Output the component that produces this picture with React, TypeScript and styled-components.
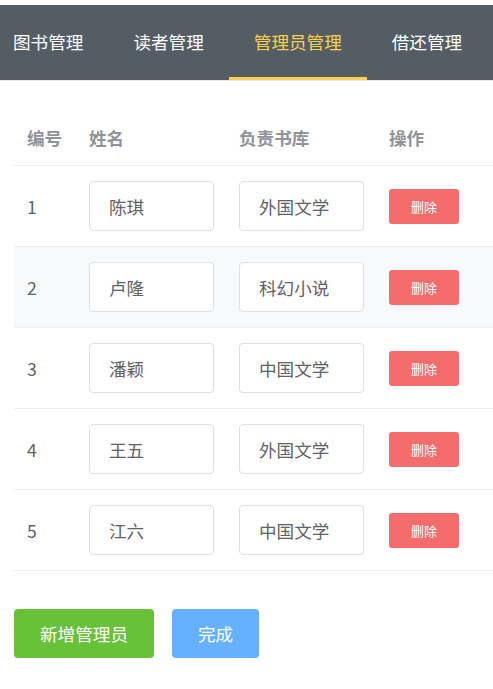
import React from 'react'
import styled, { createGlobalStyle } from 'styled-components'

const GlobalStyle = createGlobalStyle`
  body {
    margin: 0;
    background: #fff;
    font-family: "Noto Sans CJK SC", "Noto Sans", sans-serif;
  }
`

const menus = ['图书管理', '读者管理', '管理员管理', '借还管理']

const admins = [
  { id: 1, name: '陈琪', lib: '外国文学' },
  { id: 2, name: '卢隆', lib: '科幻小说' },
  { id: 3, name: '潘颖', lib: '中国文学' },
  { id: 4, name: '王五', lib: '外国文学' },
  { id: 5, name: '江六', lib: '中国文学' },
]

// the second row is shown hovered in the screenshot
const hoveredRow = 1

export default function App (): JSX.Element {
  return (
    <Page>
      <GlobalStyle />
      <NavBar>
        <NavList>
          {menus.map((m, i) => (
            <NavItem key={m} active={i === 2}>{m}</NavItem>
          ))}
        </NavList>
      </NavBar>

      <Table>
        <HeadRow>
          <HeadCell>编号</HeadCell>
          <HeadCell>姓名</HeadCell>
          <HeadCell>负责书库</HeadCell>
          <HeadCell>操作</HeadCell>
        </HeadRow>
        {admins.map((a, i) => (
          <Row key={a.id} hovered={i === hoveredRow}>
            <Cell>{a.id}</Cell>
            <Cell><TextInput defaultValue={a.name} /></Cell>
            <Cell><TextInput defaultValue={a.lib} /></Cell>
            <Cell><DeleteButton>删除</DeleteButton></Cell>
          </Row>
        ))}
      </Table>

      <Actions>
        <Button color="#67c23a">新增管理员</Button>
        <Button color="#66b1ff">完成</Button>
      </Actions>
    </Page>
  )
}

const Page = styled.div`
  padding-top: 5px;
  width: 493px;
  overflow: hidden;
`

const NavBar = styled.div`
  background: #545c64;
  height: 75px;
  border-bottom: 1px solid #e6e6e6;
  overflow: hidden;
`

const NavList = styled.div`
  display: flex;
  margin-left: -12px;
  height: 100%;
`

const NavItem = styled.div<{ active: boolean }>`
  padding: 1px 25px 0;
  height: 100%;
  box-sizing: border-box;
  display: flex;
  align-items: center;
  white-space: nowrap;
  font-size: 17.6px;
  color: ${(p) => (p.active ? '#ffd04b' : '#fff')};
  border-bottom: 3px solid ${(p) => (p.active ? '#ffd04b' : 'transparent')};
`

const Table = styled.div`
  margin: 29px 0 0 14px;
`

const grid = `
  display: grid;
  grid-template-columns: 62px 150px 150px 1fr;
  align-items: center;
  border-bottom: 1px solid #ebeef5;
`

const HeadRow = styled.div`
  ${grid}
  height: 56px;
  box-sizing: border-box;
`

const Row = styled.div<{ hovered: boolean }>`
  ${grid}
  height: 81px;
  box-sizing: border-box;
  background: ${(p) => (p.hovered ? '#f8f9fb' : '#fff')};
`

const HeadCell = styled.div`
  padding-left: 13px;
  font-size: 17.6px;
  font-weight: bold;
  color: #909399;
`

const Cell = styled.div`
  padding-left: 13px;
  font-size: 17.6px;
  color: #606266;
  display: flex;
  align-items: center;
`

const TextInput = styled.input`
  width: 125px;
  height: 50px;
  box-sizing: border-box;
  border: 1px solid #dcdfe6;
  border-radius: 4px;
  padding: 0 0 0 19px;
  font-family: inherit;
  font-size: 17.6px;
  color: #606266;
  background: #fff;
  outline: none;
`

const DeleteButton = styled.button`
  width: 70px;
  height: 35px;
  border: none;
  border-radius: 3px;
  background: #f56c6c;
  color: #fff;
  font-family: inherit;
  font-size: 13px;
  padding: 0;
`

const Actions = styled.div`
  display: flex;
  gap: 18px;
  margin: 38px 0 0 14px;
`

const Button = styled.button<{ color: string }>`
  height: 49px;
  padding: 0 26px;
  border: none;
  border-radius: 4px;
  background: ${(p) => p.color};
  color: #fff;
  font-family: inherit;
  font-size: 17.6px;
`
